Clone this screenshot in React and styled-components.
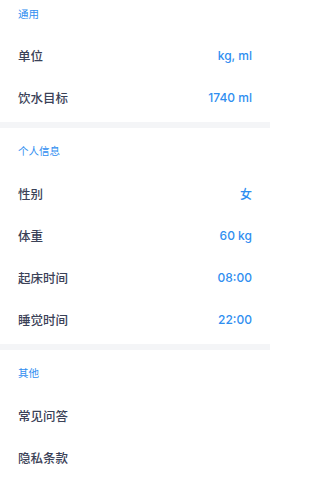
import React from "react";
import styled, { createGlobalStyle } from "styled-components";

const Global = createGlobalStyle`
  html, body { margin: 0; padding: 0; background: #ffffff; }
  body { font-family: Inter, "Noto Sans CJK SC", sans-serif; }
  * { box-sizing: border-box; }
`;

const Page = styled.div`
  width: 270px;
  display: flex;
  flex-direction: column;
  background: #f4f5f7;
  gap: 6px;
`;

const Section = styled.section`
  background: #ffffff;
  display: flex;
  flex-direction: column;
  padding: 0 18px 4px;
`;

const Header = styled.div`
  height: ${(p) => (p.$first ? "34px" : "44px")};
  padding-bottom: ${(p) => (p.$first ? "8px" : "0")};
  display: flex;
  align-items: center;
  font-family: "Noto Sans CJK SC", sans-serif;
  font-size: 10.5px;
  color: #2f8ef0;
`;

const Row = styled.div`
  height: 42px;
  display: flex;
  align-items: center;
  justify-content: space-between;
`;

const Label = styled.span`
  font-family: "Noto Sans CJK SC", sans-serif;
  font-size: 12.5px;
  font-weight: 500;
  color: #3a4157;
`;

const Value = styled.span`
  font-family: Inter, "Noto Sans CJK SC", sans-serif;
  font-size: 12px;
  font-weight: 500;
  color: #2f8ef0;
`;

const sections = [
  {
    title: "通用",
    rows: [
      ["单位", "kg, ml"],
      ["饮水目标", "1740 ml"],
    ],
  },
  {
    title: "个人信息",
    rows: [
      ["性别", "女"],
      ["体重", "60 kg"],
      ["起床时间", "08:00"],
      ["睡觉时间", "22:00"],
    ],
  },
  {
    title: "其他",
    rows: [["常见问答"], ["隐私条款"]],
  },
];

export default function App() {
  return (
    <>
      <Global />
      <Page>
        {sections.map((s, i) => (
          <Section key={s.title}>
            <Header $first={i === 0}>{s.title}</Header>
            {s.rows.map(([l, v]) => (
              <Row key={l}>
                <Label>{l}</Label>
                {v && <Value>{v}</Value>}
              </Row>
            ))}
          </Section>
        ))}
      </Page>
    </>
  );
}
